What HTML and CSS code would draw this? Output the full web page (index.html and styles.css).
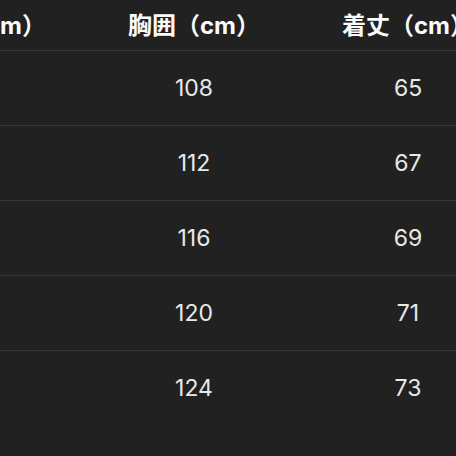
FILE: index.html
```html
<!DOCTYPE html>
<html lang="ja">
<head>
<meta charset="utf-8">
<link rel="stylesheet" href="styles.css">
</head>
<body>
<div class="frame">
  <table class="size-table">
    <thead>
      <tr><th>身幅（cm）</th><th>胸囲（cm）</th><th>着丈（cm）</th></tr>
    </thead>
    <tbody>
      <tr><td>54</td><td>108</td><td>65</td></tr>
      <tr><td>56</td><td>112</td><td>67</td></tr>
      <tr><td>58</td><td>116</td><td>69</td></tr>
      <tr><td>60</td><td>120</td><td>71</td></tr>
      <tr class="last"><td>62</td><td>124</td><td>73</td></tr>
    </tbody>
  </table>
</div>
</body>
</html>
```
FILE: styles.css
```css
html, body {
  margin: 0;
  padding: 0;
  background: #212121;
}
.frame {
  width: 456px;
  height: 456px;
  overflow: hidden;
  position: relative;
}
.size-table {
  border-collapse: collapse;
  margin-left: -127px;
  width: 642px;
  table-layout: fixed;
  font-family: Inter, "Noto Sans CJK JP", sans-serif;
  color: #e8e8e8;
}
.size-table th,
.size-table td {
  width: 214px;
  text-align: center;
  padding: 0;
  white-space: nowrap;
}
.size-table th {
  height: 46px;
  padding-bottom: 4px;
  font-size: 24px;
  font-weight: 700;
  color: #fafafa;
  border-bottom: 1px solid #383838;
  vertical-align: middle;
}
.size-table td {
  height: 74px;
  font-size: 23px;
  font-weight: 400;
  border-bottom: 1px solid #383838;
  vertical-align: middle;
}
.size-table tr.last td {
  border-bottom: none;
}
```
